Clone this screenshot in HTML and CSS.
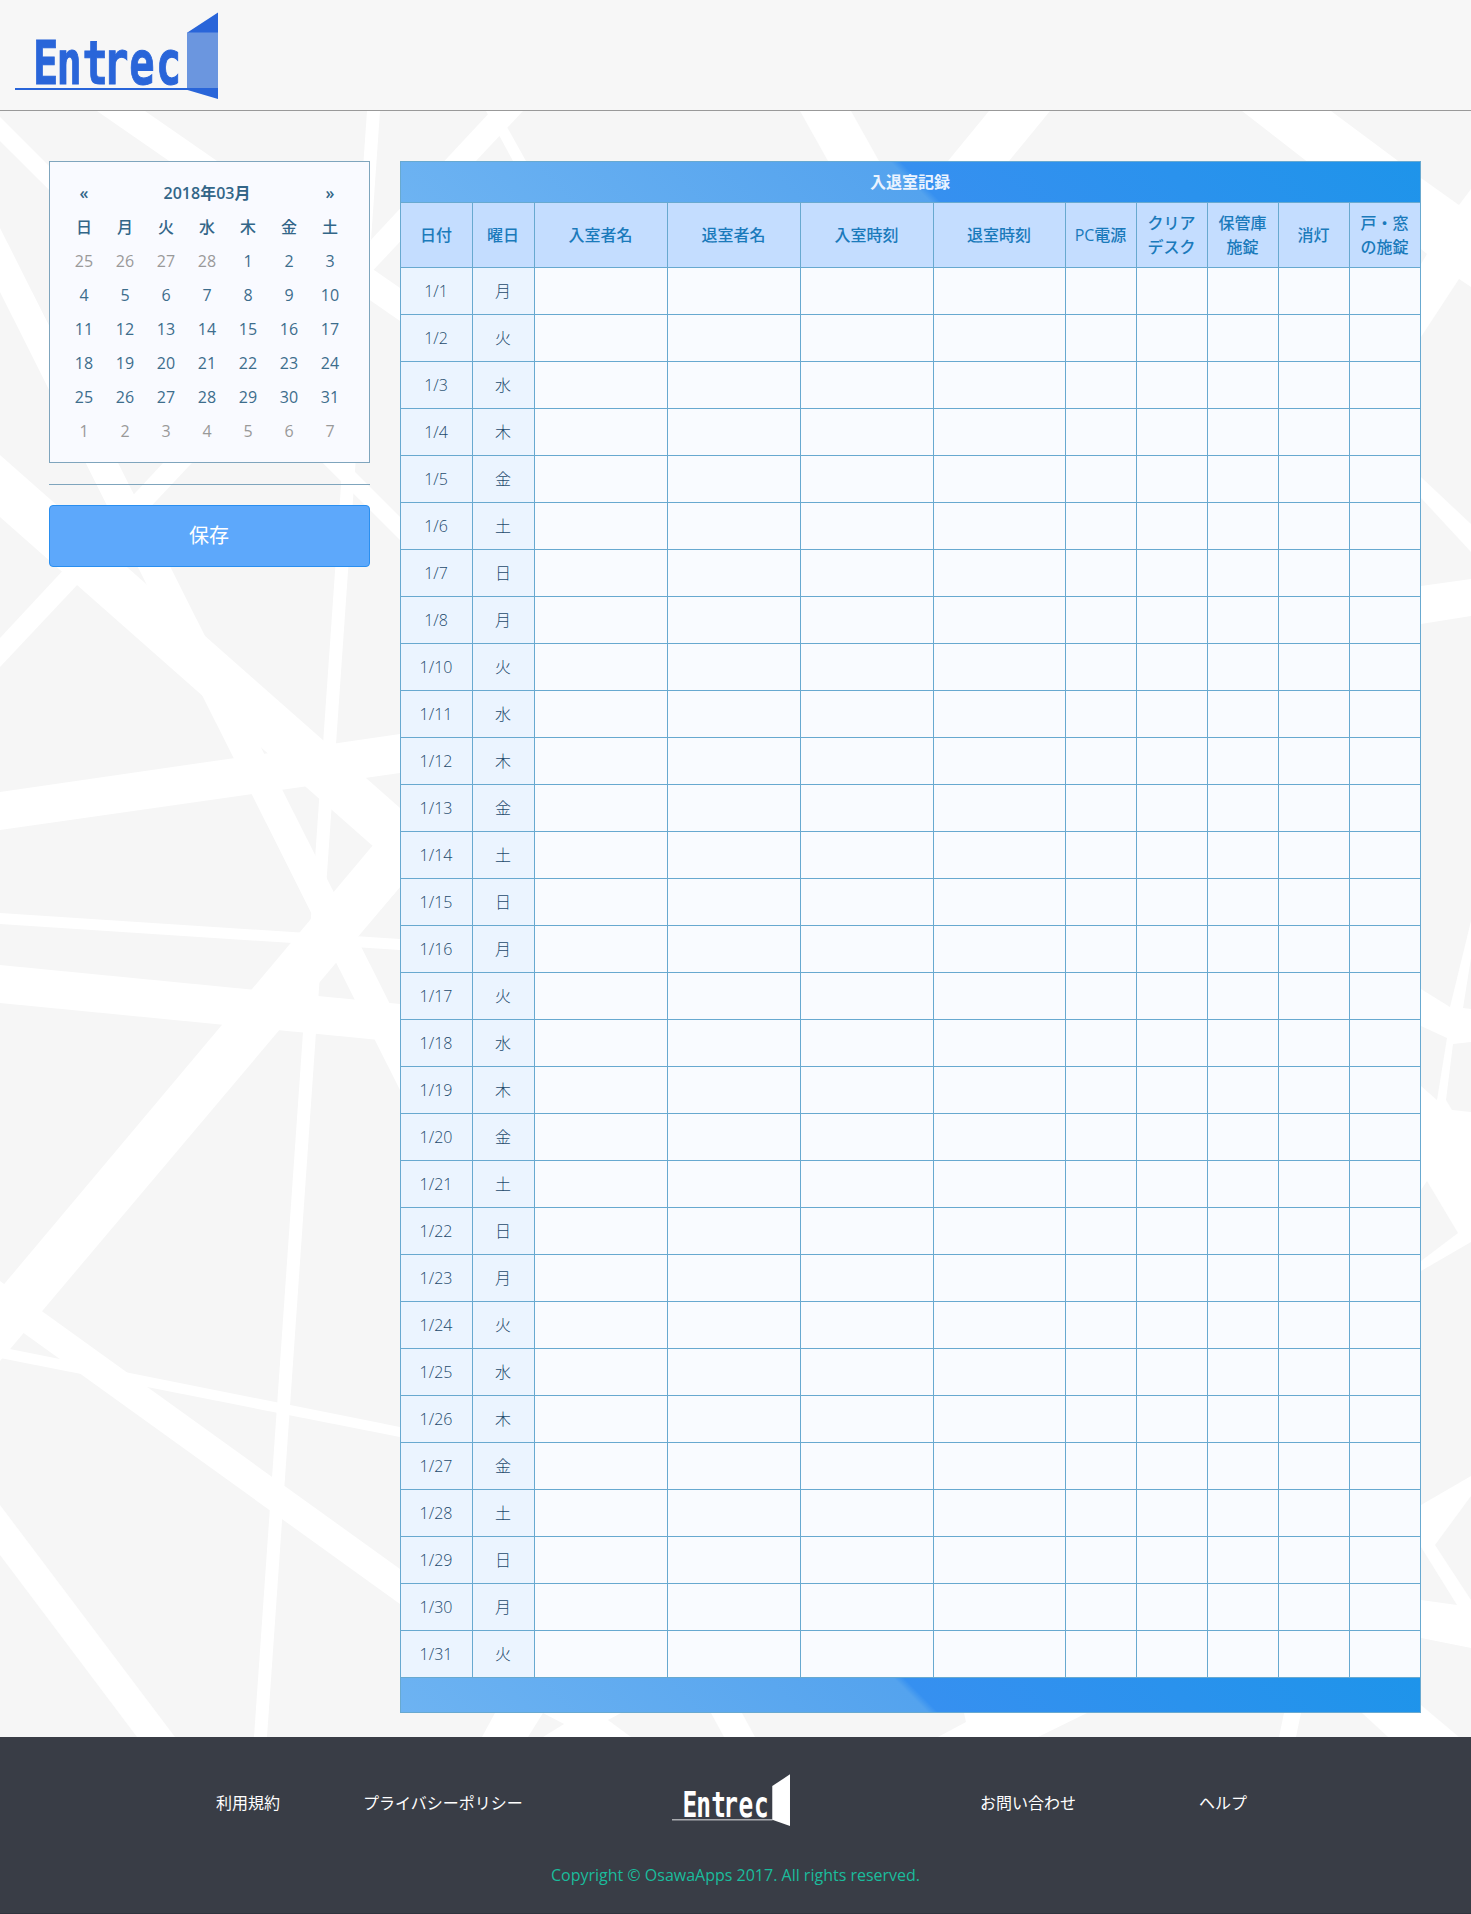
FILE: index.html
```html
<!DOCTYPE html>
<html lang="ja">
<head>
<meta charset="utf-8">
<title>Entrec</title>
<link rel="stylesheet" href="styles.css">
</head>
<body>
<header class="header">
  <svg class="logo" width="203" height="88" viewBox="15 12 203 88" role="img" aria-label="Entrec">
    <text class="logo-text" transform="scale(.69 1)" x="48 82 119.500 149.500 187.500 226" y="84">Entrec</text>
    <path fill="#6b96df" d="M187 32.5h31v56h-31z"/>
    <path fill="#2965d9" d="M187 32.7 218 12.5v20.2zM15 88h203v11L187.500 90H15z"/>
  </svg>
</header>
<main class="main">
  <svg class="backdrop" width="1471" height="1626" viewBox="0 111 1471 1626" aria-hidden="true">
    <g fill="#fff">
      <path d="M0 117 400 517V540L0 141z"/>
      <path d="M97 111H145L400 288V321z"/>
      <path d="M0 638 491 111H523L0 667z"/>
      <path d="M486 111H498L526 161H513z"/>
      <path d="M367 111H380L267 1737H254z"/>
      <path d="M0 228 400 1024V1090L0 292z"/>
      <path d="M0 455 400 808V870L0 517z"/>
      <path d="M0 792 400 734V773L0 830z"/>
      <path d="M0 913 400 939V950L0 924z"/>
      <path d="M0 965 400 1004V1042L0 1003z"/>
      <path d="M0 1289 400 813V887L0 1361z"/>
      <path d="M373 845 400 813V887L358 936z"/>
      <path d="M0 1281 400 1569V1604L0 1316z"/>
      <path d="M0 1347 400 1427V1437L0 1358z"/>
      <path d="M0 1505 175 1737H137L0 1555z"/>
      <path d="M800 111H851L879 161H828z"/>
      <path d="M989 111H1050L1009 161H948z"/>
      <path d="M1242 111H1331L1421 178V250z"/>
      <path d="M495 1713H543L528 1737H482z"/>
      <path d="M543 1713H621L608 1720 631 1737H543L564 1724z"/>
      <path d="M711 1713H742L755 1737H724z"/>
      <path d="M964 1713H1087L1038 1737H938L966 1722z"/>
      <path d="M1284 1713H1301L1296 1737H1279z"/>
      <path d="M1362 1713H1421V1737H1388z"/>
      <path d="M1421 111H1471V1737H1421z"/>
    </g>
    <g fill="#f6f6f6">
      <path d="M1421 111H1471V189L1459 205 1421 178z"/>
      <path d="M1421 249 1427 254 1421 264z"/>
      <path d="M1471 287 1459 279 1421 337V477L1471 524z"/>
      <path d="M1421 498 1471 552V579L1421 586z"/>
      <path d="M1421 624 1471 616V921L1450 1007 1421 989z"/>
      <path d="M1471 958 1463 1008 1471 1009z"/>
      <path d="M1421 1026 1447 1038 1437 1100 1421 1086z"/>
      <path d="M1471 1042 1453 1044 1446 1100 1452 1110 1471 1112z"/>
      <path d="M1427 1181 1458 1233 1421 1261V1190z"/>
      <path d="M1471 1242V1476L1421 1505V1271z"/>
      <path d="M1471 1496 1435 1545 1471 1600z"/>
      <path d="M1421 1547 1457 1605 1421 1600z"/>
      <path d="M1421 1638 1471 1648V1737H1459L1421 1705z"/>
    </g>
  </svg>
  <aside class="side">
    <table class="calendar">
      <thead>
        <tr class="month"><th>«</th><th colspan="5">2018年03月</th><th>»</th></tr>
        <tr><th>日</th><th>月</th><th>火</th><th>水</th><th>木</th><th>金</th><th>土</th></tr>
      </thead>
      <tbody>
        <tr><td class="out">25</td><td class="out">26</td><td class="out">27</td><td class="out">28</td><td>1</td><td>2</td><td>3</td></tr>
        <tr><td>4</td><td>5</td><td>6</td><td>7</td><td>8</td><td>9</td><td>10</td></tr>
        <tr><td>11</td><td>12</td><td>13</td><td>14</td><td>15</td><td>16</td><td>17</td></tr>
        <tr><td>18</td><td>19</td><td>20</td><td>21</td><td>22</td><td>23</td><td>24</td></tr>
        <tr><td>25</td><td>26</td><td>27</td><td>28</td><td>29</td><td>30</td><td>31</td></tr>
        <tr><td class="out">1</td><td class="out">2</td><td class="out">3</td><td class="out">4</td><td class="out">5</td><td class="out">6</td><td class="out">7</td></tr>
      </tbody>
    </table>
    <hr class="rule">
    <button class="save" type="button">保存</button>
  </aside>
  <table class="records">
    <colgroup>
      <col class="c-date"><col class="c-day"><col class="c-wide" span="3"><col class="c-exit"><col class="c-check" span="5">
    </colgroup>
    <thead>
      <tr class="title"><th colspan="11">入退室記録</th></tr>
      <tr class="heads">
        <th>日付</th><th>曜日</th><th>入室者名</th><th>退室者名</th><th>入室時刻</th><th>退室時刻</th><th>PC電源</th><th>クリア<br>デスク</th><th>保管庫<br>施錠</th><th>消灯</th><th>戸・窓<br>の施錠</th>
      </tr>
    </thead>
    <tbody id="rows"></tbody>
    <tfoot><tr><td colspan="11"></td></tr></tfoot>
  </table>
</main>
<footer class="footer">
  <nav class="links">
    <a>利用規約</a>
    <a>プライバシーポリシー</a>
    <svg class="footer-logo" width="118" height="52" viewBox="15 12 203 88" preserveAspectRatio="none" role="img" aria-label="Entrec">
      <text class="logo-text" transform="scale(.69 1)" x="48 82 119.500 149.500 187.500 226" y="84">Entrec</text>
      <path class="line" d="M15 88h173v2.500H15z"/>
      <path d="M187.500 32.500 218 12.500V100L187.500 89.500z"/>
    </svg>
    <a>お問い合わせ</a>
    <a>ヘルプ</a>
  </nav>
  <p class="copyright">Copyright © OsawaApps 2017. All rights reserved.</p>
</footer>
<script src="script.js"></script>
</body>
</html>
```
FILE: styles.css
```css
* { box-sizing: border-box; }
body {
  margin: 0;
  font: 16px/24px "Open Sans", "Noto Sans CJK JP", sans-serif;
  color: #3d6d8c;
  background: #f6f6f6;
}
.header {
  height: 111px;
  padding: 12px 15px;
  background: #f7f7f7;
  border-bottom: 1px solid #999;
}
.logo, .footer-logo { display: block; overflow: visible; }
.logo-text {
  font: 700 61px "DejaVu Sans Mono", monospace;
  fill: #2965d9;
  stroke: #2965d9;
  stroke-width: 1px;
}

.main {
  position: relative;
  display: flex;
  align-items: flex-start;
  gap: 30px;
  height: 1626px;
  padding: 50px 50px 0 49px;
}
.backdrop { position: absolute; left: 0; top: 0; z-index: -1; }

.side { width: 321px; }
.calendar {
  display: block;
  width: 321px;
  height: 302px;
  padding: 14px 16px 14px 13.5px;
  border: 1px solid #7fa5bd;
  background: #f9faff;
  border-spacing: 0;
}
.calendar th, .calendar td {
  width: 41px;
  height: 34px;
  padding: 0;
  text-align: center;
}
.calendar th { font-weight: 500; color: #336688; }
.calendar .month th { font-weight: 600; }
.calendar .out { color: #999; }
.rule { height: 1px; margin: 21px 0 20px; border: 0; background: #7fa5bd; }
.save {
  display: block;
  width: 100%;
  height: 62px;
  padding: 0 1px 2px 0;
  border: 1px solid #2a8ff0;
  border-radius: 4px;
  background: #5da8fb;
  color: #fff;
  font: 20px/30px "Noto Sans CJK JP", sans-serif;
}

.records {
  width: 1021px;
  table-layout: fixed;
  border-spacing: 0;
  border: 1px solid #68a9d0;
  border-width: 1px 0 0 1px;
  text-align: center;
}
.records th, .records td {
  padding: 0;
  border: 1px solid #68a9d0;
  border-width: 0 1px 1px 0;
}
.c-date { width: 72px; }
.c-day { width: 62px; }
.c-wide { width: 133px; }
.c-exit { width: 132px; }
.c-check { width: 71px; }
.title th, tfoot td {
  background: linear-gradient(45deg, #6db3f2 0%, #54a3ee 50%, #3690f0 51%, #1e94ea 100%);
}
.records .title th { height: 41px; padding-right: 1px; color: #eaf3ff; font-weight: 700; }
.records .heads th {
  height: 65px;
  padding-right: 1px;
  background: #c4ddff;
  color: #1a7abb;
  font-weight: 500;
}
.records tbody td { height: 47px; background: #f9fbff; font-weight: 300; color: #1d4a6c; }
.records tbody .label { padding-right: 1px; background: #ebf4ff; }
.records tfoot td { height: 35px; }

.footer {
  height: 177px;
  padding-top: 37px;
  background: #393d46;
  border-bottom: 1px solid #30333d;
}
.links {
  display: grid;
  grid-template-columns: 147px 309px 308px 219px auto;
  align-items: center;
  height: 52px;
  padding-left: 216px;
  color: #fff;
}
.links a { padding-top: 6px; }
.footer-logo { fill: #fff; }
.footer-logo .logo-text { fill: #fff; stroke: none; }
.footer-logo .line { fill: #a9abaf; }
.copyright { margin: 37px 0 0; text-align: center; color: #1abc9c; }
```
FILE: script.js
```js
const days = ["月", "火", "水", "木", "金", "土", "日"];
const dates = [];
for (let d = 1; d <= 31; d++) if (d !== 9) dates.push(d);
document.getElementById("rows").innerHTML = dates
  .map((d, i) => `<tr><td class="label">1/${d}</td><td class="label">${days[i % 7]}</td>${"<td></td>".repeat(9)}</tr>`)
  .join("");
```
